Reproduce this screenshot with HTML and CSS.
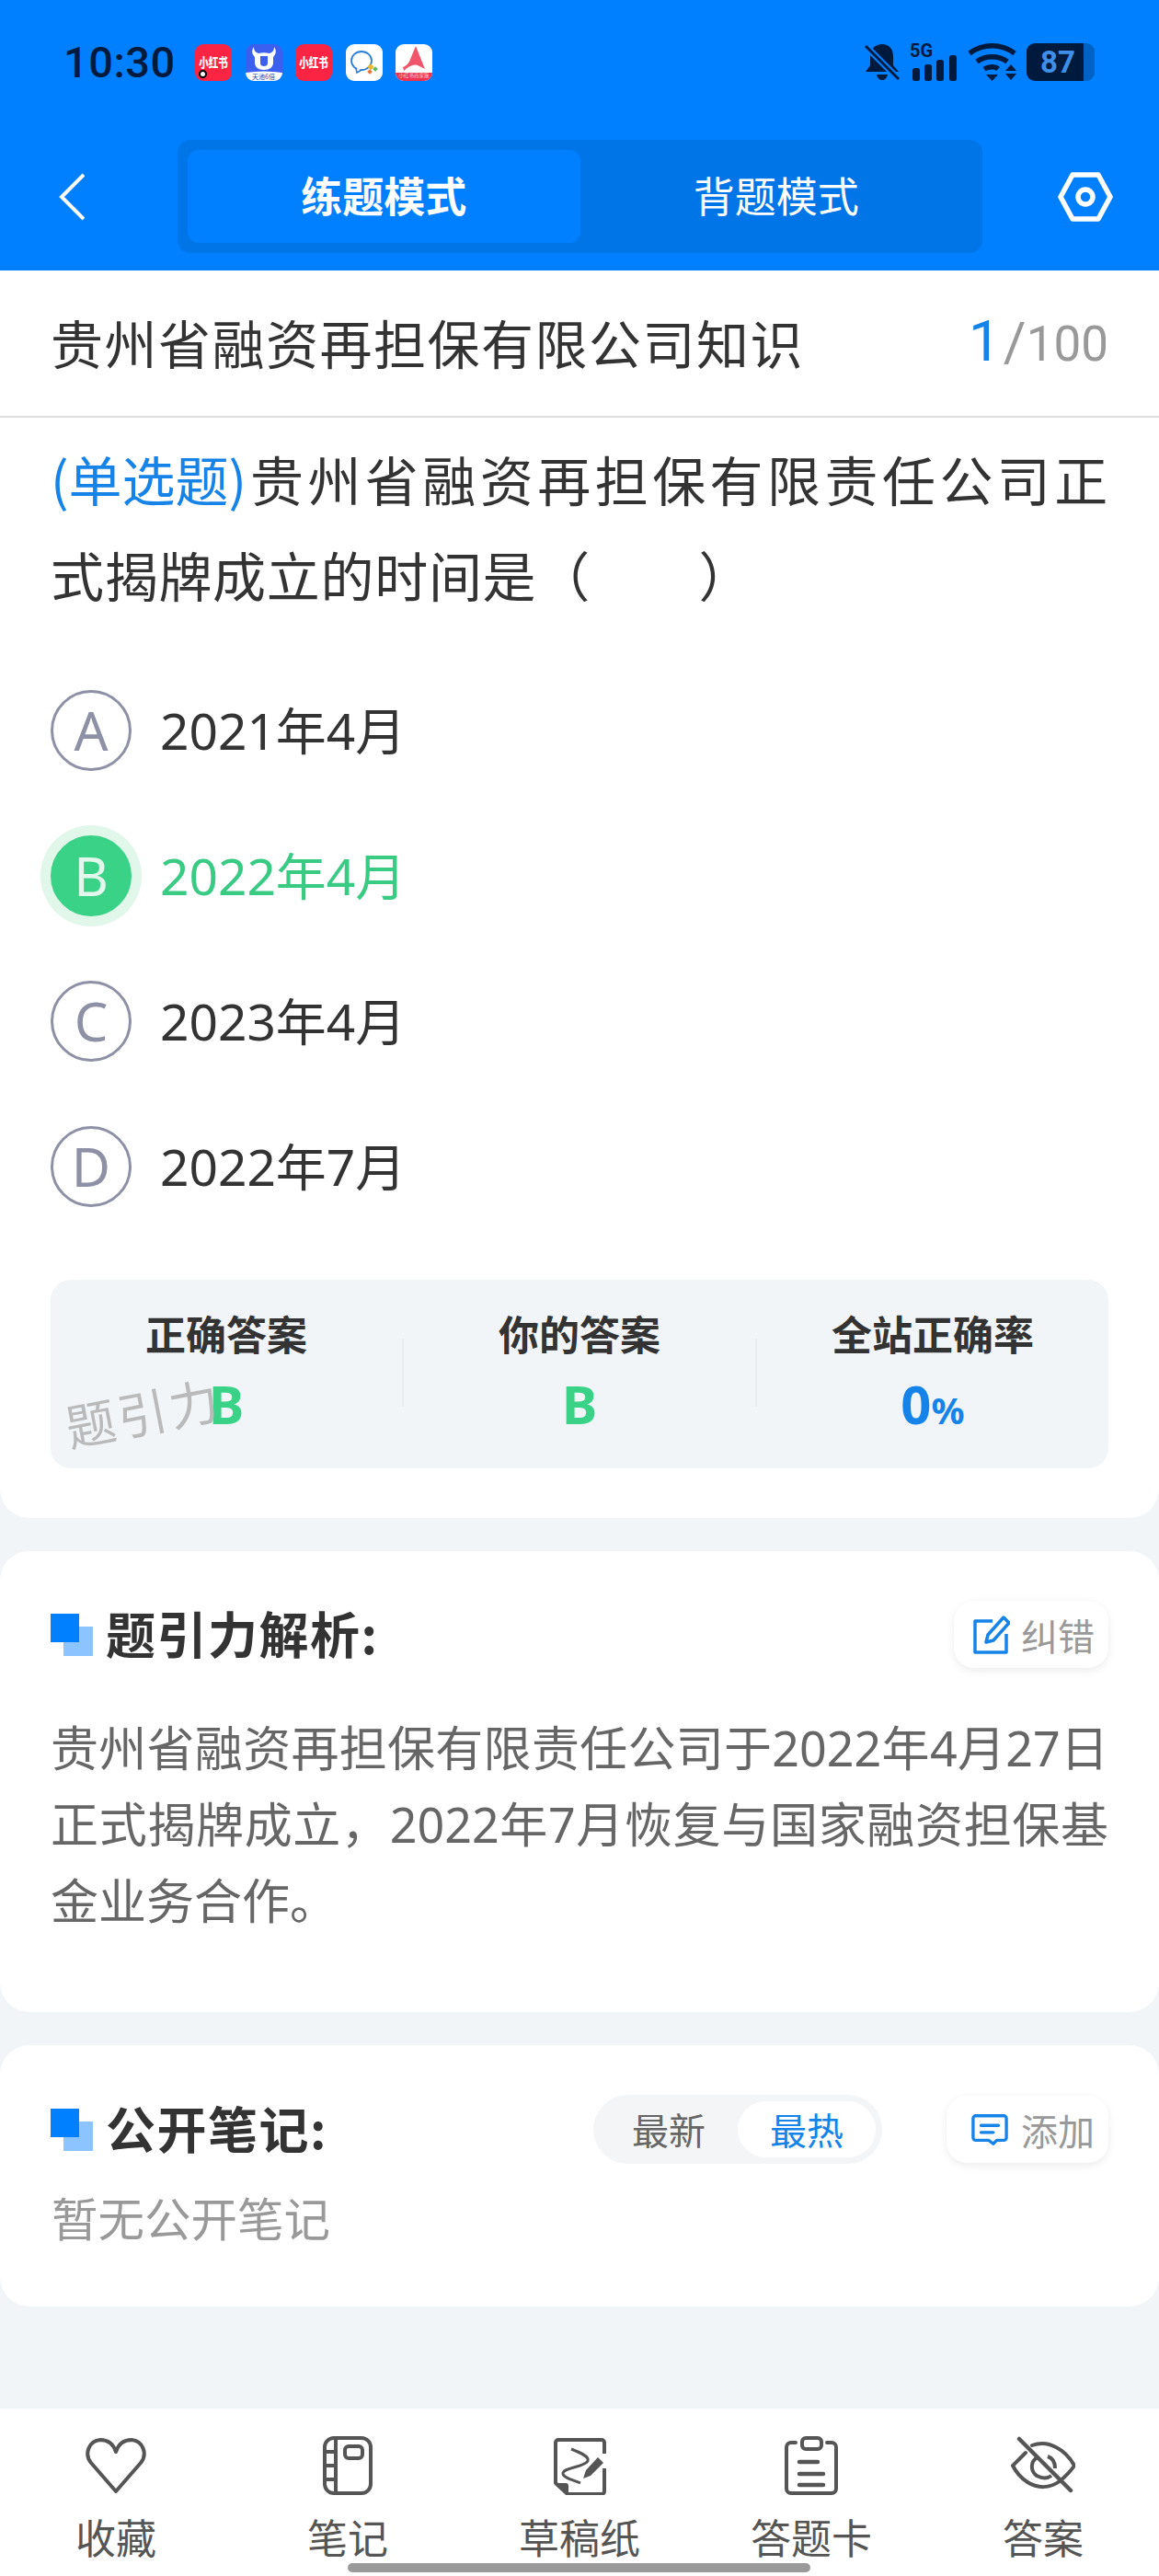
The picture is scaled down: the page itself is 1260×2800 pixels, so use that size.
FILE: index.html
```html
<!DOCTYPE html>
<html lang="zh-CN">
<head>
<meta charset="utf-8">
<title>练题模式</title>
<link rel="stylesheet" href="styles.css">
</head>
<body>
<div class="page">
  <header class="header">
    <div class="status">
      <span class="time">10:30</span>
      <div class="apps">
        <span class="app app-red"><span class="app-txt">小红书</span><i class="app-dot"></i></span>
        <span class="app app-blue">
          <svg class="app-svg" viewBox="0 0 40 40"><path d="M9 3c0 4 2 6 5 7 4-1 8-1 12 0 3-1 5-3 5-7 3 4 2 8-1 11v6c0 5-4 8-10 8s-10-3-10-8v-6c-3-3-4-7-1-11z" fill="#fff"/><path d="M16 13h8v8c0 2-2 3-4 3s-4-1-4-3z" fill="#3d5ff0"/><path d="M0 31q20 -3 40 0v9H0z" fill="#fff"/></svg>
          <span class="app-cap">天池6倍</span>
        </span>
        <span class="app app-red"><span class="app-txt">小红书</span></span>
        <span class="app app-white">
          <svg class="app-svg" viewBox="0 0 40 40"><ellipse cx="17" cy="18" rx="11" ry="10" fill="none" stroke="#2c7fd6" stroke-width="1.800"/><path d="M11 26l1 5 5-3" fill="#fff" stroke="#2c7fd6" stroke-width="1.600"/><rect x="25" y="22" width="5" height="5" fill="#f0b429" transform="rotate(45 27 24)"/><rect x="30" y="25" width="4" height="4" fill="#5cb85c" transform="rotate(45 32 27)"/><rect x="24" y="28" width="4" height="4" fill="#e8743b" transform="rotate(45 26 30)"/></svg>
        </span>
        <span class="app app-white">
          <svg class="app-svg" viewBox="0 0 40 40"><path d="M22 2l10 25-6-3c-5-3-11-1-17 5l-1-4c5-2 7-5 9-11z" fill="#f0566b"/><path d="M0 31h40v4a5 5 0 0 1-5 5H5a5 5 0 0 1-5-5z" fill="#ee3350"/></svg>
          <span class="app-cap app-cap-light">小红书商家版</span>
        </span>
      </div>
      <div class="sys">
        <svg class="sys-bell" viewBox="0 0 38 41"><path d="M19 1c7 0 12 5 12 13v10l6 7H1l5-7V14C6 6 12 1 19 1z" fill="#001a3d"/><path d="M13 34h12c-1 4-3 6-6 6s-5-2-6-6z" fill="#001a3d"/><path d="M1 3l36 36" stroke="#0080ff" stroke-width="7"/><path d="M1 3l36 36" stroke="#001a3d" stroke-width="3"/></svg>
        <span class="sys-net">
          <span class="sys-5g">5G</span>
          <svg class="sys-bars" viewBox="0 0 48 28"><rect x="0" y="14" width="8" height="14" rx="2.500" fill="#001a3d"/><rect x="13" y="10" width="8" height="18" rx="2.500" fill="#001a3d"/><rect x="26" y="5" width="8" height="23" rx="2.500" fill="#001a3d"/><rect x="40" y="0" width="8" height="28" rx="2.500" fill="#001a3d"/></svg>
        </span>
        <svg class="sys-wifi" viewBox="0 0 53 41"><g fill="none" stroke="#001a3d" stroke-width="5.500"><path d="M2 11c14-11 35-11 49 0"/><path d="M10 20c9-7 24-7 33 0"/><path d="M18 28c5-3 12-3 15 0"/></g><path d="M20 34h13l-6.500 7z" fill="#001a3d"/><path d="M41 30l6-7 6 7zM41 33h12l-6 7z" fill="#001a3d"/></svg>
        <span class="battery"><span class="battery-num">87</span></span>
      </div>
    </div>
    <nav class="nav">
      <svg class="nav-back" viewBox="0 0 28 52"><path d="M27 2L3 26l24 24" fill="none" stroke="#fff" stroke-width="4"/></svg>
      <div class="tabs">
        <span class="tab tab-on">练题模式</span>
        <span class="tab">背题模式</span>
      </div>
      <svg class="nav-set" viewBox="0 0 60 54"><path d="M16 3h28l13 24-13 24H16L3 27z" fill="none" stroke="#fff" stroke-width="5.500" stroke-linejoin="round"/><circle cx="30" cy="27" r="8" fill="none" stroke="#fff" stroke-width="5.500"/></svg>
    </nav>
  </header>

  <main class="main">
    <section class="card card-q">
      <div class="title-row">
        <span class="title">贵州省融资再担保有限公司知识</span>
        <span class="count"><b class="count-cur">1</b><span class="count-sep">/</span>100</span>
      </div>
      <div class="question"><span class="q-type">(单选题)</span>贵州省融资再担保有限责任公司正式揭牌成立的时间是（&emsp;&emsp;）</div>
      <ul class="options">
        <li class="option"><span class="opt-mark">A</span><span class="opt-text">2021年4月</span></li>
        <li class="option option-ok"><span class="opt-mark">B</span><span class="opt-text">2022年4月</span></li>
        <li class="option"><span class="opt-mark">C</span><span class="opt-text">2023年4月</span></li>
        <li class="option"><span class="opt-mark">D</span><span class="opt-text">2022年7月</span></li>
      </ul>
      <div class="stats">
        <div class="stat"><span class="stat-label">正确答案</span><span class="stat-value green">B</span></div>
        <i class="stat-div"></i>
        <div class="stat"><span class="stat-label">你的答案</span><span class="stat-value green">B</span></div>
        <i class="stat-div"></i>
        <div class="stat"><span class="stat-label">全站正确率</span><span class="stat-value blue">0<small class="pct">%</small></span></div>
        <span class="watermark">题引力</span>
      </div>
    </section>

    <section class="card card-a">
      <div class="sec-head">
        <svg class="sec-icon" viewBox="0 0 46 46"><rect x="14" y="14" width="32" height="32" fill="#8cc4ff"/><rect x="0" y="0" width="31" height="31" fill="#0080ff"/></svg>
        <h2 class="sec-title">题引力解析:</h2>
        <span class="chip">
          <svg class="chip-icon" viewBox="0 0 40 42"><path d="M21 6H2v34h34V20" fill="none" stroke="#1583e8" stroke-width="3.500" stroke-linejoin="round"/><path d="M33 2l6 6-17 19-8 2 2-8z" fill="none" stroke="#1583e8" stroke-width="3.500" stroke-linejoin="round"/></svg>
          纠错
        </span>
      </div>
      <p class="analysis">贵州省融资再担保有限责任公司于2022年4月27日正式揭牌成立，2022年7月恢复与国家融资担保基金业务合作。</p>
    </section>

    <section class="card card-n">
      <div class="sec-head">
        <svg class="sec-icon" viewBox="0 0 46 46"><rect x="14" y="14" width="32" height="32" fill="#8cc4ff"/><rect x="0" y="0" width="31" height="31" fill="#0080ff"/></svg>
        <h2 class="sec-title">公开笔记:</h2>
        <div class="sort"><span class="sort-item">最新</span><span class="sort-item sort-on">最热</span></div>
        <span class="chip chip-add">
          <svg class="chip-icon" viewBox="0 0 42 36"><path d="M5 2h32a3 3 0 0 1 3 3v22a3 3 0 0 1-3 3H29l-4 4-5-4H5a3 3 0 0 1-3-3V5a3 3 0 0 1 3-3z" fill="none" stroke="#1583e8" stroke-width="3.500" stroke-linejoin="round"/><path d="M11 13h20M11 21h14" stroke="#1583e8" stroke-width="3.500" stroke-linecap="round"/></svg>
          添加
        </span>
      </div>
      <p class="empty">暂无公开笔记</p>
    </section>
  </main>

  <footer class="tabbar">
    <div class="tb-item">
      <svg class="tb-icon" viewBox="0 0 70 64"><path d="M35 60L8 29C0 19 6 5 18 4c8 0 14 4 17 13C38 8 44 4 52 4c12 1 18 15 10 25z" fill="none" stroke="#555" stroke-width="4" stroke-linejoin="round"/></svg>
      <span class="tb-label">收藏</span>
    </div>
    <div class="tb-item">
      <svg class="tb-icon" viewBox="0 0 70 64"><rect x="10" y="2" width="50" height="60" rx="10" fill="none" stroke="#555" stroke-width="4"/><path d="M22 2v60M10 17h12M10 32h12M10 47h12" stroke="#555" stroke-width="4"/><rect x="32" y="11" width="19" height="13" rx="4" fill="none" stroke="#555" stroke-width="4"/></svg>
      <span class="tb-label">笔记</span>
    </div>
    <div class="tb-item">
      <svg class="tb-icon" viewBox="0 0 70 64"><path d="M62 19V7a3 3 0 0 0-3-3H12a3 3 0 0 0-3 3V51l13 12h37a3 3 0 0 0 3-3V35" fill="none" stroke="#555" stroke-width="4" stroke-linejoin="round"/><path d="M9 51h11a3 3 0 0 1 3 3v9z" fill="#555"/><path d="M26 14C36 18 46 22 44 27 40 34 16 34 17 41 18 46 30 48 36 51" fill="none" stroke="#555" stroke-width="3"/><path d="M39 46l3-9 13-14 6 6-14 14z" fill="#555"/></svg>
      <span class="tb-label">草稿纸</span>
    </div>
    <div class="tb-item">
      <svg class="tb-icon" viewBox="0 0 70 64"><path d="M18 7h-5a5 5 0 0 0-5 5v45a5 5 0 0 0 5 5h44a5 5 0 0 0 5-5V12a5 5 0 0 0-5-5h-5" fill="none" stroke="#555" stroke-width="4" stroke-linecap="round"/><rect x="25" y="2" width="21" height="12" rx="4" fill="none" stroke="#555" stroke-width="4"/><path d="M22 28h20M22 41h26M22 53h26" stroke="#555" stroke-width="4.500" stroke-linecap="round"/></svg>
      <span class="tb-label">答题卡</span>
    </div>
    <div class="tb-item">
      <svg class="tb-icon" viewBox="0 0 70 64"><path d="M16 18L2 32c4 8 10 14 16 18 11 7 24 7 35-1 6-5 12-11 16-17-5-9-12-16-20-20-9-5-18-5-26-2" fill="none" stroke="#555" stroke-width="4" stroke-linecap="round"/><path d="M29 23c-8 4-8 15-1 20 6 3 12 3 16 0M40 22c6 2 8 7 8 13" fill="none" stroke="#555" stroke-width="4"/><path d="M9 3l56 56" stroke="#555" stroke-width="4.500" stroke-linecap="round"/></svg>
      <span class="tb-label">答案</span>
    </div>
    <i class="home-bar"></i>
  </footer>
</div>
</body>
</html>
```
FILE: styles.css
```css
* { box-sizing: border-box; }
html, body { margin: 0; padding: 0; }
body { font-family: "Noto Sans", "Noto Sans CJK SC", sans-serif; background: #f1f5f8; color: #333; }
.page { width: 1260px; height: 2800px; display: flex; flex-direction: column; overflow: hidden; position: relative; }

.header { background: #0080ff; height: 294px; flex: none; }
.status { height: 152px; display: flex; align-items: flex-start; padding: 47px 0 0 69px; }
.time { width: 143px; font: 500 47px/41px Roboto, sans-serif; color: #001a3d; letter-spacing: 0.5px; }
.apps { display: flex; gap: 14.500px; margin-top: 1px; }
.app { width: 40px; height: 40px; border-radius: 9px; position: relative; overflow: hidden; display: flex; align-items: center; justify-content: center; }
.app-red { background: #fb2543; }
.app-blue { background: #3d5ff0; }
.app-white { background: #fff; }
.app-txt { font: 900 10.500px/14px "Noto Sans CJK SC", sans-serif; color: #fff; white-space: nowrap; transform: scaleY(1.3); }
.app-dot { position: absolute; left: 4px; top: 28px; width: 9px; height: 9px; border-radius: 50%; background: #fff; border: 2.500px solid #000; }
.app-svg { position: absolute; inset: 0; width: 40px; height: 40px; }
.app-cap { position: absolute; left: 0; right: 0; bottom: 1px; text-align: center; font: 7px/8px "Noto Sans CJK SC", sans-serif; color: #2440b0; white-space: nowrap; }
.app-cap-light { font-size: 5.500px; color: #ffd5db; bottom: 2px; }
.sys { display: flex; align-items: flex-start; margin-left: 470px; }
.sys-bell { width: 38px; height: 41px; flex: none; }
.sys-net { width: 50px; height: 41px; margin-left: 12px; position: relative; flex: none; }
.sys-5g { position: absolute; left: -1px; top: -1px; font: 700 20px/18px Roboto, sans-serif; color: #001a3d; }
.sys-bars { position: absolute; left: 2px; top: 13px; width: 48px; height: 28px; }
.sys-wifi { width: 53px; height: 41px; margin-left: 12px; flex: none; }
.battery { width: 74px; height: 41px; margin-left: 11px; border-radius: 9px; background: linear-gradient(90deg, #001a3d 0 84%, #0062c4 84% 100%); display: flex; align-items: center; padding-left: 15px; flex: none; }
.battery-num { font: 700 33px/41px Roboto, sans-serif; color: #3f8fe8; }

.nav { display: flex; align-items: center; height: 123px; padding-left: 64px; }
.nav-back { width: 28px; height: 52px; flex: none; }
.tabs { width: 875px; height: 123px; margin-left: 101px; padding: 11px; background: #0075e8; border-radius: 14px; display: flex; flex: none; }
.tab { flex: 1; display: flex; align-items: center; justify-content: center; padding-bottom: 4px; color: #fff; font: 400 45px/60px "Noto Sans CJK SC", sans-serif; border-radius: 12px; }
.tab-on { background: #0080ff; font-weight: 700; }
.nav-set { width: 60px; height: 54px; margin-left: 82px; flex: none; }

.main { flex: 1; display: flex; flex-direction: column; gap: 36px; min-height: 0; }
.card { background: #fff; }
.card-q { height: 1356px; border-radius: 0 0 32px 32px; }
.card-a { height: 501px; border-radius: 32px; padding: 54px 55px 0; }
.card-n { height: 284px; border-radius: 32px; padding: 55px 55px 0; }

.title-row { height: 160px; border-bottom: 2px solid #ddd; display: flex; align-items: center; justify-content: space-between; padding: 0 55px 4px 55px; }
.title { font: 400 57px/72px "Noto Sans CJK SC", sans-serif; color: #333; letter-spacing: 1.500px; }
.count { font: 400 53px/72px Roboto, "Noto Sans", sans-serif; color: #999; margin-top: 2px; }
.count-cur { font-weight: 400; font-size: 62px; color: #1583e8; margin-right: 3px; }
.count-sep { font-size: 60px; }

.question { margin: 0; padding: 14px 55px 0 55px; font: 400 58px/104px "Noto Sans CJK SC", sans-serif; letter-spacing: 0.700px; color: #333; text-align: justify; height: 261px; }
.q-type { display: inline-block; color: #1583e8; letter-spacing: 0; }

.options { list-style: none; margin: 0; padding: 0 0 0 55px; display: flex; flex-direction: column; }
.option { height: 158px; display: flex; align-items: center; gap: 31px; }
.opt-mark { width: 88px; height: 88px; border: 3px solid #8e90a6; border-radius: 50%; display: flex; align-items: center; justify-content: center; font: 400 58px/88px "Noto Sans", sans-serif; color: #8e90a6; flex: none; }
.opt-text { font: 400 55px/72px "Noto Sans", "Noto Sans CJK SC", sans-serif; color: #333; }
.option-ok .opt-mark { background: #39d287; border-color: #39d287; color: #e2f8ec; box-shadow: 0 0 0 11px #e0f7ea; }
.option-ok .opt-text { color: #39ca84; }

.stats { position: relative; margin: 44px 55px 0; height: 205px; background: #f1f5f8; border-radius: 22px; display: flex; align-items: flex-start; }
.stat { flex: 1; display: flex; flex-direction: column; align-items: center; padding-top: 28px; }
.stat-label { font: 700 44px/60px "Noto Sans CJK SC", sans-serif; color: #333; }
.stat-value { font: 700 58px/70px "Noto Sans", sans-serif; margin-top: 12px; }
.green { color: #39d287; }
.blue { color: #1583e8; }
.pct { font-size: 40px; }
.stat-div { width: 2px; height: 74px; margin-top: 64px; background: #e8ecf0; flex: none; }
.watermark { position: absolute; left: 15px; top: 107px; font: 400 54px/72px "Noto Sans CJK SC", sans-serif; color: #bababa; letter-spacing: 3px; transform: rotate(-11deg); pointer-events: none; }

.sec-head { display: flex; align-items: center; height: 73px; }
.sec-icon { width: 46px; height: 46px; flex: none; }
.sec-title { margin: 0 0 0 14px; padding-bottom: 4px; font: 700 54px/73px "Noto Sans CJK SC", sans-serif; color: #333; letter-spacing: 1.500px; flex: 1; }
.chip { height: 73px; padding: 0 15px 0 21px; background: #fff; border-radius: 22px; box-shadow: 0 3px 10px rgba(0,0,0,.08); display: flex; align-items: center; gap: 12px; font: 400 40px/50px "Noto Sans CJK SC", sans-serif; color: #999; flex: none; }
.chip-icon { width: 40px; height: 42px; flex: none; }
.analysis { margin: 45px 0 0; font: 400 52px/83px "Noto Sans", "Noto Sans CJK SC", sans-serif; color: #666; text-align: justify; }

.sort { display: flex; align-items: center; width: 314px; height: 75px; border-radius: 38px; background: #f4f5f7; padding: 7px; margin-right: 70px; flex: none; }
.sort-item { flex: 1; text-align: center; font: 400 40px/61px "Noto Sans CJK SC", sans-serif; color: #666; border-radius: 31px; }
.sort-on { background: #fff; color: #1583e8; }
.chip-add { padding: 0 15px 0 27px; gap: 14px; }
.empty { margin: 22px 0 0 1px; font: 400 50.500px/72px "Noto Sans CJK SC", sans-serif; color: #999; }

.tabbar { height: 182px; flex: none; background: #fff; display: flex; position: relative; padding-top: 30px; }
.tb-item { flex: 1; display: flex; flex-direction: column; align-items: center; }
.tb-icon { width: 70px; height: 64px; }
.tb-label { font: 400 44px/56px "Noto Sans CJK SC", sans-serif; color: #555; margin-top: 17px; }
.home-bar { position: absolute; left: 378px; bottom: 4px; width: 503px; height: 10px; border-radius: 5px; background: #9a9a9a; }
```
